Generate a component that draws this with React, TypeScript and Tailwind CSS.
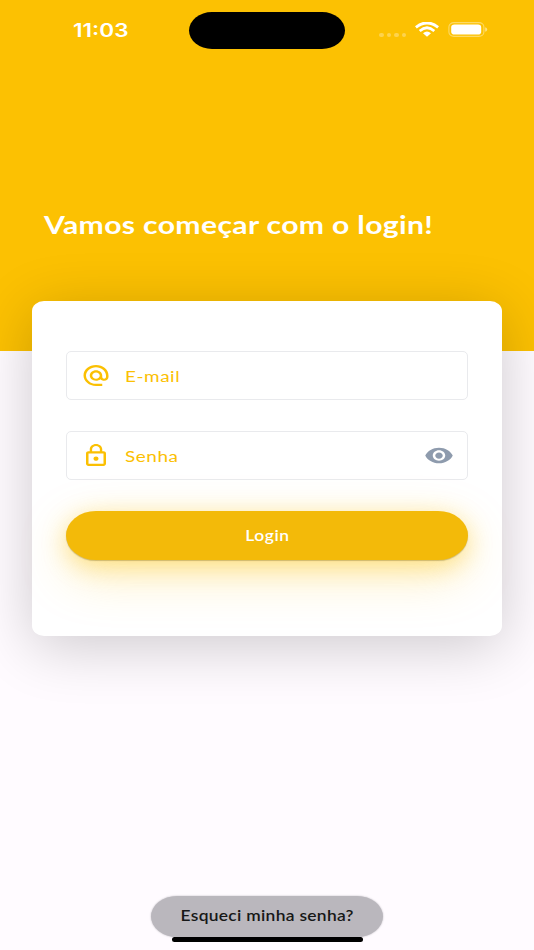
import type { ReactNode } from "react";
import { MdAlternateEmail, MdLockOutline, MdVisibility } from "react-icons/md";

function StatusBar() {
  return (
    <div className="flex h-[60px] items-start">
      <div className="w-[189px] pt-[18px] pl-[73px] font-['Inter'] text-[18.5px] leading-6 font-semibold">
        <span className="inline-block origin-left scale-x-[1.22]">11:03</span>
      </div>
      <div className="mt-3 h-[37px] w-[156px] rounded-[23px/18.5px] bg-black" />
      <div className="mt-[22px] ml-[34px] flex items-start">
        <div className="mt-[11px] flex gap-[3px]">
          {[0, 1, 2, 3].map((dot) => (
            <span key={dot} className="h-1 w-[4.6px] rounded-full bg-white/30" />
          ))}
        </div>
        <svg className="ml-[9px] h-[15px] w-6" viewBox="0 0 24 15" fill="none" stroke="white">
          <path d="M.9 5.3Q12-3.4 23.1 5.3" strokeWidth="2.9" />
          <path d="M4.7 8.9Q12 2.6 19.3 8.9" strokeWidth="2.7" />
          <path d="M8 11.2Q12 7.8 16 11.2L12 14.8Z" fill="white" stroke="none" />
        </svg>
        <svg className="ml-[9px] h-[15px] w-10" viewBox="0 0 40 15" fill="none">
          <rect x=".9" y=".6" width="35" height="13.8" rx="5" ry="4.3" stroke="white" strokeOpacity=".4" strokeWidth="1.1" />
          <rect x="3.2" y="2.6" width="30" height="10" rx="3.2" ry="2.8" fill="white" />
          <path d="M37.2 5.2Q39.2 5.8 39.2 7.5T37.2 9.8Z" fill="white" fillOpacity=".5" />
        </svg>
      </div>
    </div>
  );
}

function Field({ icon, label, trailing }: { icon: ReactNode; label: string; trailing?: ReactNode }) {
  return (
    <div className="flex h-[49px] items-center rounded-[5px] border border-[#e9eaed] pr-[13px] pl-[13.5px]">
      {icon}
      <span className="ml-[14.5px] flex-1 text-[15.5px] leading-6 text-[#fbc002]">
        <span className="inline-block origin-left scale-x-[1.22] tracking-[0.45px]">{label}</span>
      </span>
      {trailing}
    </div>
  );
}

export default function App() {
  const iconClass = "h-[25px] w-[30px] text-[#fbc002]";
  return (
    <div className="flex h-[950px] w-[534px] flex-col overflow-hidden bg-[#fffbff] font-['Lato',sans-serif]">
      <header className="h-[351px] shrink-0 bg-[#fcc102] text-white">
        <StatusBar />
        <h1 className="mt-[149px] ml-[43.5px] text-[24px] leading-8 font-bold whitespace-nowrap">
          <span className="inline-block origin-left scale-x-[1.255] tracking-[0.28px]">Vamos começar com o login!</span>
        </h1>
      </header>

      <main className="-mt-[50px] mx-8 flex h-[335px] shrink-0 flex-col rounded-[12px/10px] bg-white px-[34px] pt-[50px] shadow-[0_10px_60px_rgba(0,0,0,0.2)]">
        <div className="flex flex-col gap-[31px]">
          <Field label="E-mail" icon={<MdAlternateEmail className={iconClass} preserveAspectRatio="none" />} />
          <Field
            label="Senha"
            icon={<MdLockOutline className={iconClass} preserveAspectRatio="none" />}
            trailing={<MdVisibility className="h-[25px] w-[30px] text-[#8e9bad]" preserveAspectRatio="none" />}
          />
          <button className="h-[49px] rounded-[30px/24.5px] bg-[#f3ba09] pt-px text-[14.5px] font-semibold text-white shadow-[0_1px_1px_rgba(100,80,0,0.3),0_6px_24px_rgba(252,193,2,0.4),0_16px_50px_rgba(252,193,2,0.26)]">
            <span className="inline-block scale-x-[1.2] tracking-[0.45px]">Login</span>
          </button>
        </div>
      </main>

      <footer className="mt-auto flex flex-col items-center pb-2">
        <button className="h-[41px] w-[232px] rounded-[26px/20.5px] bg-[#bab7bd] text-[14.5px] font-semibold text-[#171717] shadow-[0_0_2px_#bab7bd]">
          <span className="inline-block scale-x-[1.2] tracking-[0.25px] whitespace-nowrap">Esqueci minha senha?</span>
        </button>
        <div className="h-[5.5px] w-[191px] rounded-full bg-black" />
      </footer>
    </div>
  );
}
